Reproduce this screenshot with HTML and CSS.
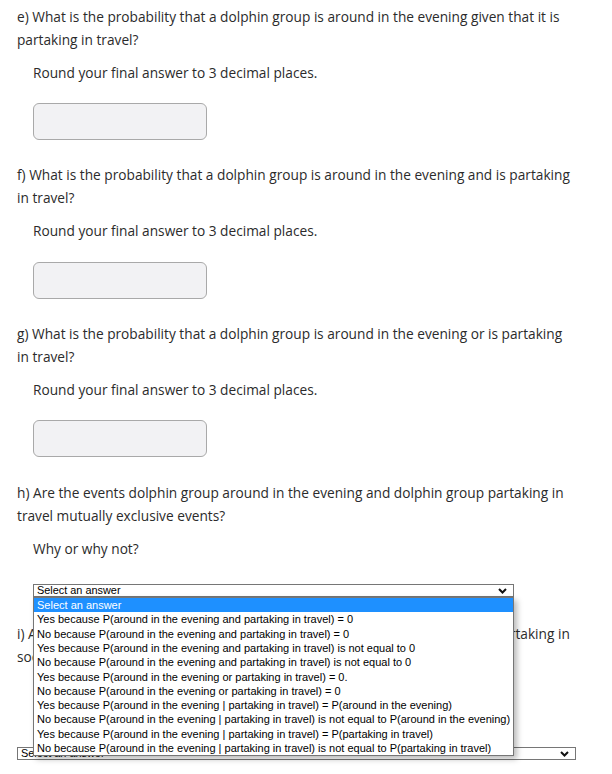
FILE: index.html
```html
<!DOCTYPE html>
<html lang="en">
<head>
<meta charset="utf-8">
<title>Dolphin probability questions</title>
<link rel="stylesheet" href="styles.css">
</head>
<body>
<main class="page">
  <section class="q">
    <p class="prompt">e) What is the probability that a dolphin group is around in the evening given that it is partaking in travel?</p>
    <p class="note">Round your final answer to 3 decimal places.</p>
    <div class="answer"></div>
  </section>
  <section class="q">
    <p class="prompt">f) What is the probability that a dolphin group is around in the evening and is partaking in travel?</p>
    <p class="note">Round your final answer to 3 decimal places.</p>
    <div class="answer"></div>
  </section>
  <section class="q">
    <p class="prompt">g) What is the probability that a dolphin group is around in the evening or is partaking in travel?</p>
    <p class="note">Round your final answer to 3 decimal places.</p>
    <div class="answer"></div>
  </section>
  <section class="q last">
    <p class="prompt">h) Are the events dolphin group around in the evening and dolphin group partaking in travel mutually exclusive events?</p>
    <p class="note">Why or why not?</p>
    <div class="select-wrap">
      <div class="select">
        <span>Select an answer</span>
        <svg class="chev" width="9" height="6" viewBox="0 0 9 6"><polyline points="1,1 4.5,4.5 8,1" fill="none" stroke="#111" stroke-width="2"/></svg>
      </div>
      <ul class="listbox">
        <li class="sel">Select an answer</li>
        <li>Yes because P(around in the evening and partaking in travel) = 0</li>
        <li>No because P(around in the evening and partaking in travel) = 0</li>
        <li>Yes because P(around in the evening and partaking in travel) is not equal to 0</li>
        <li>No because P(around in the evening and partaking in travel) is not equal to 0</li>
        <li>Yes because P(around in the evening or partaking in travel) = 0.</li>
        <li>No because P(around in the evening or partaking in travel) = 0</li>
        <li>Yes because P(around in the evening | partaking in travel) = P(around in the evening)</li>
        <li>No because P(around in the evening | partaking in travel) is not equal to P(around in the evening)</li>
        <li>Yes because P(around in the evening | partaking in travel) = P(partaking in travel)</li>
        <li>No because P(around in the evening | partaking in travel) is not equal to P(partaking in travel)</li>
      </ul>
    </div>
  </section>
  <section class="q">
    <p class="prompt">i) Are the events dolphin group around in the evening and a dolphin group partaking in social travel independent events?</p>
    <div class="select wide">
      <span>Select an answer</span>
      <svg class="chev" width="9" height="6" viewBox="0 0 9 6"><polyline points="1,1 4.5,4.5 8,1" fill="none" stroke="#111" stroke-width="2"/></svg>
    </div>
  </section>
</main>
</body>
</html>
```
FILE: styles.css
```css
html, body {
  margin: 0;
  padding: 0;
  background: #fff;
}
.page {
  padding: 4.5px 37px 0 17px;
  font-family: "Open Sans", "Noto Sans", sans-serif;
  font-size: 13.7px;
  line-height: 23px;
  color: #2b2b2b;
}
.q {
  margin: 0 0 23.2px;
}
.q.last {
  margin-bottom: 24.5px;
}
.prompt {
  margin: 0;
}
.note {
  margin: 10px 0 0 16px;
}
.answer {
  margin: 19.5px 0 0 16px;
  width: 174px;
  height: 37px;
  box-sizing: border-box;
  border: 1px solid #a9a9a9;
  border-radius: 6px;
  background: #f2f2f4;
}
.select-wrap {
  position: relative;
  margin: 24.5px 0 0 16px;
  width: 481px;
}
.select {
  display: flex;
  align-items: center;
  justify-content: space-between;
  box-sizing: border-box;
  height: 13px;
  padding: 0 6px 0 3px;
  border: 1px solid #767676;
  background: #fff;
  font-family: "Liberation Sans", Arial, sans-serif;
  font-size: 10.9px;
  line-height: 11px;
  color: #000;
}
.select.wide {
  margin-top: 79.5px;
  width: 559px;
}
.chev {
  display: block;
}
.listbox {
  position: absolute;
  top: 13px;
  left: 0;
  width: 481px;
  box-sizing: border-box;
  margin: 0;
  padding: 0;
  list-style: none;
  border: 1px solid #767676;
  background: #fff;
  box-shadow: 3px 3px 6px rgba(0, 0, 0, 0.28);
  font-family: "Liberation Sans", Arial, sans-serif;
  font-size: 11px;
  line-height: 14.3px;
  color: #000;
  z-index: 2;
}
.listbox li {
  height: 14.3px;
  padding-left: 3px;
  white-space: nowrap;
}
.listbox li.sel {
  background: #1e90ff;
  color: #fff;
}
```
